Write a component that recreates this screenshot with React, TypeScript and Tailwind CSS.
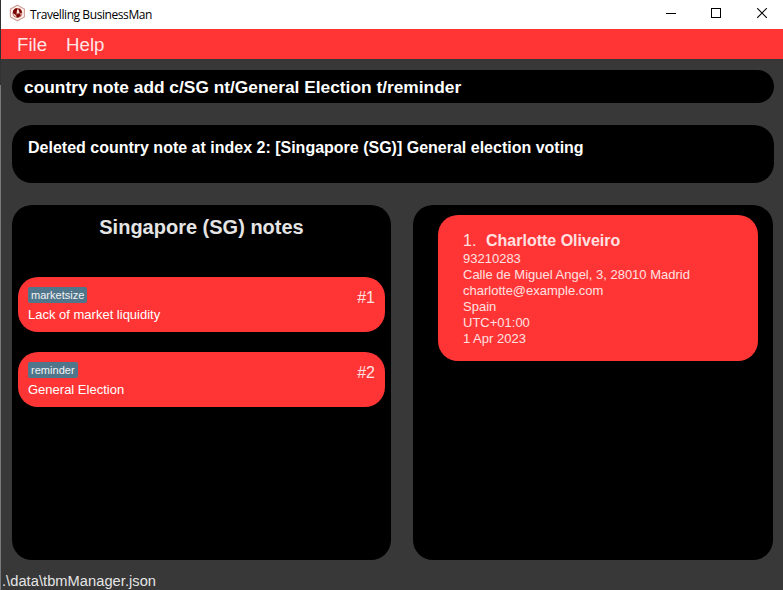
type Note = { tag: string; text: string; index: number };

const notes: Note[] = [
  { tag: "marketsize", text: "Lack of market liquidity", index: 1 },
  { tag: "reminder", text: "General Election", index: 2 },
];

const details = [
  "93210283",
  "Calle de Miguel Angel, 3, 28010 Madrid",
  "charlotte@example.com",
  "Spain",
  "UTC+01:00",
  "1 Apr 2023",
];

function AppLogo() {
  return (
    <svg className="ml-2 mt-1 size-[18px]" viewBox="0 0 18 18" fill="none">
      <path d="M8.4 1.2 15.4 5v8l-7 3.8L1.4 13V5Z" fill="#fff3ef" stroke="#cf9c95" strokeWidth="1.1" />
      <circle cx="8.4" cy="9" r="4.9" fill="#b9625b" />
      <path d="M4 7.2C4.8 5.2 6.3 4.2 8.2 4.3L8 6.4l1 1.4-2 1.4.4 1.6-1.4.3-2-1.8Z M9.8 4.6c1.7.6 2.7 1.8 3 3.6l-1 1-1.8-1.4Z M7.5 10.6l2.6-.9 1.7.9c-.6 1.8-1.7 2.8-3.3 3L7.3 12Z" fill="#790603" />
      <path d="M8.2 5.6 10 6.4l.3 2-1.4 1-1.3-1Z M4.3 9.6l2.1 1.1.7 2.2c-1.5-.5-2.5-1.6-2.8-3.3Z M11 9.8l1.7-.4-.5 1.6Z" fill="#fbe5df" />
    </svg>
  );
}

function TitleBar() {
  return (
    <header className="flex h-[29px] shrink-0 bg-white text-black">
      <AppLogo />
      <span className="ml-[3px] mt-[6px] whitespace-nowrap font-['Open_Sans',sans-serif] text-[12px] leading-[18px] tracking-[-0.42px]">
        Travelling BusinessMan
      </span>
      <div className="ml-auto mr-[15px] flex h-[27px] items-center gap-[35px]">
        <svg className="size-[11px]" viewBox="0 0 11 11" shapeRendering="crispEdges">
          <path d="M1 5h10v1H1z" />
        </svg>
        <svg className="size-[11px]" viewBox="0 0 11 11" fill="none" stroke="black" shapeRendering="crispEdges">
          <path d="M.5.5h9v9h-9z" />
        </svg>
        <svg className="size-[11px]" viewBox="0 0 11 11" fill="none" stroke="black" strokeWidth="1.1">
          <path d="m.2.2 9.6 9.6M9.8.2.2 9.8" />
        </svg>
      </div>
    </header>
  );
}

function NoteCard({ note }: { note: Note }) {
  return (
    <article className="flex h-[55px] justify-between rounded-[20px] bg-[#ff3535] pl-[10px] pr-[10px] pt-[10px]">
      <div className="flex flex-col items-start">
        <span className="h-4 whitespace-nowrap rounded-[2px] bg-[#50768b] px-[3px] text-[11px] leading-[16px] tracking-[0.03px] text-[#f3f3f3]">
          {note.tag}
        </span>
        <span className="mt-[4px] whitespace-nowrap text-[13px] leading-[16px] text-white">{note.text}</span>
      </div>
      <span className="mt-px text-[16px] leading-[20px] text-[#ffe1e1]">#{note.index}</span>
    </article>
  );
}

export default function App() {
  return (
    <div className="flex h-[590px] w-[783px] overflow-hidden bg-[#383838] font-['Liberation_Sans',Arial,sans-serif]">
      <div className="flex w-px shrink-0 flex-col bg-[#777a7a]">
        <div className="h-[85px] bg-[#303336]" />
      </div>
      <div className="flex min-w-0 flex-1 flex-col">
        <TitleBar />
        <nav className="flex h-[30px] shrink-0 gap-[19px] bg-[#ff3535] pl-4 text-[18.67px] leading-[31px] text-[#ffe5e5]">
          <span>File</span>
          <span>Help</span>
        </nav>
        <main className="flex flex-col pl-[11px] pr-[9px] pt-[11px]">
          <div className="h-[33px] whitespace-nowrap rounded-[17px] bg-black pl-3 text-[17.33px] font-bold leading-[35px] text-white">
            country note add c/SG nt/General Election t/reminder
          </div>
          <div className="mt-[22px] h-[58px] whitespace-nowrap rounded-[20px] bg-black pl-4 pt-[13px] text-[16px] font-bold leading-[20px] text-white">
            Deleted country note at index 2: [Singapore (SG)] General election voting
          </div>
          <div className="mr-px mt-[22px] flex h-[355px] gap-[22px]">
            <section className="w-[379px] rounded-[20px] bg-black px-[6px] pt-[10px]">
              <h1 className="text-center text-[20px] font-bold leading-[24px] text-[#e5e5e5]">Singapore (SG) notes</h1>
              <div className="mt-[38px] flex flex-col gap-[20px]">
                {notes.map((note) => (
                  <NoteCard key={note.index} note={note} />
                ))}
              </div>
            </section>
            <section className="flex-1 rounded-[20px] bg-black pl-[25px] pr-[15px] pt-[10px]">
              <article className="h-[146px] whitespace-nowrap rounded-[20px] bg-[#ff3535] pl-[25px] pt-[16px] text-[13px] leading-[16px] text-[#ffe1e1]">
                <h2 className="flex h-5 text-[16px] leading-[20px]">
                  <span className="w-[23px]">1.</span>
                  <span className="font-bold">Charlotte Oliveiro</span>
                </h2>
                {details.map((line) => (
                  <p key={line}>{line}</p>
                ))}
              </article>
            </section>
          </div>
        </main>
        <footer className="mt-[12px] whitespace-nowrap pl-px text-[14.67px] leading-[19px] tracking-[0.04px] text-[#e5e5e5]">
          .\data\tbmManager.json
        </footer>
      </div>
    </div>
  );
}
